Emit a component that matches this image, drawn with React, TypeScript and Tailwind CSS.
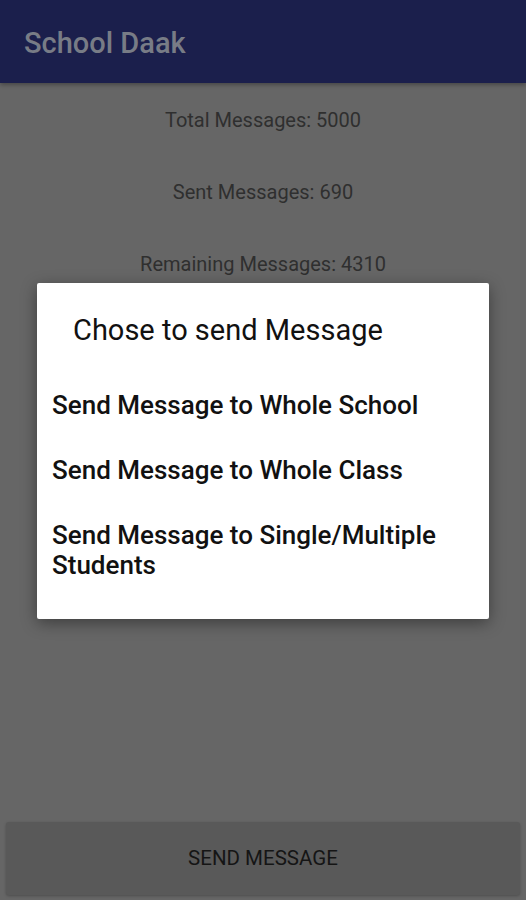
import React from "react";

export default function App() {
  return (
    <div className="relative w-[526px] h-[900px] overflow-hidden bg-[#666666] flex flex-col" style={{ fontFamily: "Roboto, 'Noto Sans', sans-serif" }}>
      <div className="h-[83px] shrink-0 bg-[#1b1f4c] flex items-center pl-[24px] pt-[4px] shadow-[0_2px_4px_rgba(0,0,0,0.3)]">
        <span className="text-[29px] text-[#787c86] font-medium leading-none">School Daak</span>
      </div>
      <div className="flex flex-col items-center text-[20px] text-[#2f2f2f] leading-none pt-[27px] gap-[52px]">
        <div>Total Messages: 5000</div>
        <div>Sent Messages: 690</div>
        <div>Remaining Messages: 4310</div>
      </div>
      <div className="mt-auto mx-[6px] mb-[5px] h-[73px] rounded-[3px] bg-[#595959] flex items-center justify-center text-[20.5px] text-[#151515] shadow-[0_1px_3px_rgba(0,0,0,0.25)]">
        SEND MESSAGE
      </div>
      <div className="absolute left-[37px] top-[283px] w-[452px] h-[336px] bg-white rounded-[2px] shadow-[0_4px_16px_rgba(0,0,0,0.4)] flex flex-col">
        <div className="pl-[36px] pt-[33px] text-[29px] text-[#111] leading-none">Chose to send Message</div>
        <div className="pl-[15px] pt-[45px] flex flex-col gap-[35px] text-[26px] font-medium text-[#111] leading-[30px]">
          <div>Send Message to Whole School</div>
          <div>Send Message to Whole Class</div>
          <div>Send Message to Single/Multiple<br />Students</div>
        </div>
      </div>
    </div>
  );
}
